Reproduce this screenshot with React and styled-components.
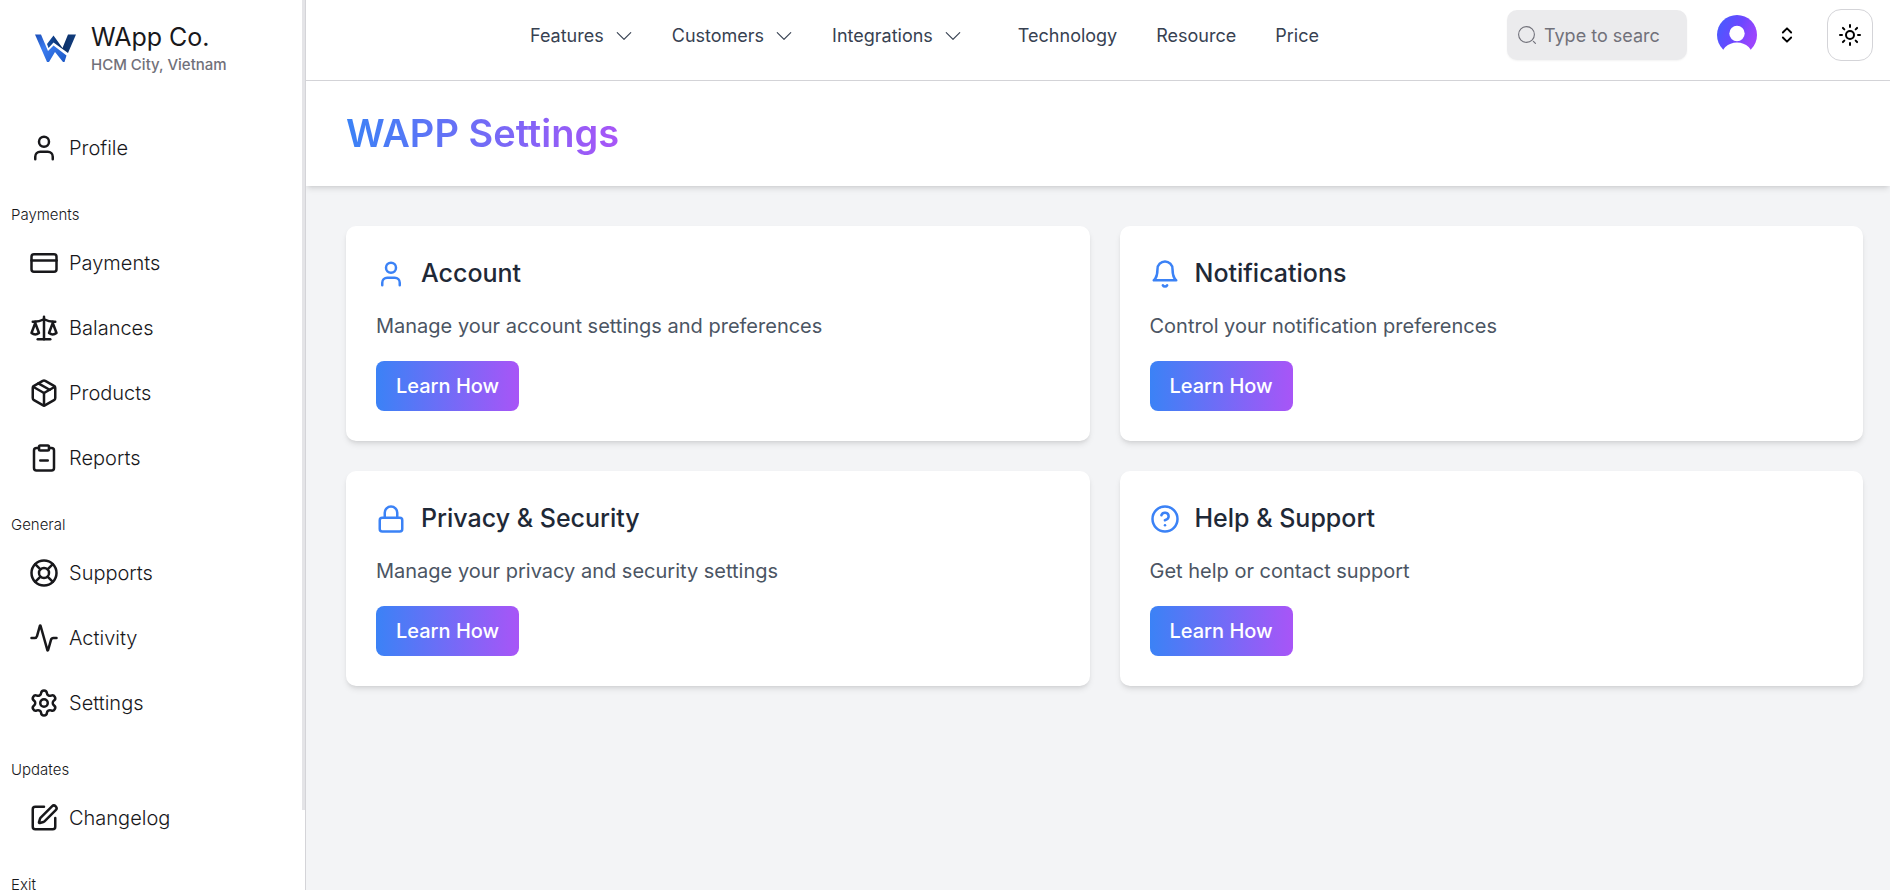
import React from "react";
import styled, { createGlobalStyle } from "styled-components";
import {
  User, CreditCard, Scale, Package, ClipboardMinus, LifeBuoy, Activity,
  Settings, SquarePen, Lock, CircleQuestionMark, ChevronsUpDown, Sun,
} from "lucide-react";
import { FiBell } from "react-icons/fi";
import { BsChevronDown } from "react-icons/bs";

const GlobalStyle = createGlobalStyle`
  *, *::before, *::after { box-sizing: border-box; }
  body { margin: 0; background: #f3f4f6; }
  body, button, input { font-family: Inter, "Liberation Sans", sans-serif; }
  h1, h2, h3, p, ul { margin: 0; padding: 0; font-weight: inherit; }
`;

const Page = styled.div`
  display: flex;
  height: 100vh;
  overflow: hidden;
`;

const Sidebar = styled.aside`
  position: relative;
  flex: 0 0 306px;
  background: #fff;
  border-right: 1px solid #d4d4d8;
`;

const SidebarScroll = styled.div`
  display: flex;
  flex-direction: column;
  height: 100%;
  overflow-y: auto;
  scrollbar-width: none;
  padding-bottom: 78px;
`;

const ScrollThumb = styled.div`
  position: absolute;
  top: 0;
  right: 0;
  width: 3px;
  height: 91%;
  background: #e4e4e7;
`;

const Brand = styled.div`
  display: flex;
  flex: 0 0 115px;
  align-items: flex-start;
  gap: 14px;
  padding: 20px 0 0 34px;
`;

const BrandLogo = styled.svg`
  width: 43px;
  height: 30px;
  margin-top: 13px;
`;

const BrandName = styled.div`
  font-size: 25px;
  line-height: 34px;
  color: #18181b;
`;

const BrandPlace = styled.div`
  font-size: 15px;
  line-height: 22px;
  font-weight: 500;
  color: #71717a;
`;

const GroupLabel = styled.h2`
  font-size: 15px;
  font-weight: 300;
  line-height: 20px;
  padding: 25px 0 5px 11px;
  color: #18181b;
`;

const MenuList = styled.ul`
  list-style: none;
`;

const MenuLink = styled.a`
  display: flex;
  align-items: center;
  gap: 10px;
  height: 65px;
  padding-left: 29px;
  font-size: 20px;
  font-weight: 300;
  color: #18181b;
  text-decoration: none;
`;

const Main = styled.main`
  flex: 1;
  min-width: 0;
  overflow-y: auto;
`;

const TopBar = styled.header`
  display: flex;
  align-items: center;
  height: 81px;
  padding: 0 17px 10px 36px;
  background: #fff;
  border-bottom: 1px solid #d4d4d8;
`;

const Nav = styled.nav`
  flex: 1;
  display: flex;
  justify-content: center;
  align-items: center;
  gap: 39px;
  padding-top: 2px;
`;

const NavMenus = styled.div`
  display: flex;
  gap: 39px;
  padding-right: 17px;
`;

const NavButton = styled.button`
  display: flex;
  align-items: center;
  gap: 11px;
  padding: 0;
  border: 0;
  background: none;
  font-size: 18px;
  line-height: 24px;
  color: #374151;
`;

const NavLink = styled.a`
  font-size: 18px;
  line-height: 24px;
  color: #374151;
  text-decoration: none;
`;

const SearchBox = styled.label`
  display: flex;
  align-items: center;
  gap: 8px;
  width: 180px;
  height: 50px;
  padding: 0 27px 0 11px;
  border-radius: 10px;
  background: #ebebed;
  box-shadow: 0 1px 2px rgba(0, 0, 0, 0.05);
  color: #71717a;
  svg { flex: none; }
`;

const SearchInput = styled.input`
  flex: 1;
  min-width: 0;
  padding: 0;
  border: 0;
  outline: 0;
  background: none;
  font-size: 18px;
  color: #18181b;
  &::placeholder { color: #71717a; opacity: 1; }
`;

const AccountButton = styled.button`
  display: flex;
  align-items: center;
  gap: 20px;
  margin: 0 30px;
  padding: 0;
  border: 0;
  background: none;
  color: #000;
`;

const ThemeButton = styled.button`
  display: grid;
  place-items: center;
  width: 46px;
  height: 52px;
  padding: 0;
  border: 1px solid #d4d4d8;
  border-radius: 14px;
  background: #fff;
  color: #000;
`;

const TitleBand = styled.div`
  display: flex;
  padding: 30px 40px;
  background: #fff;
  box-shadow: 0 4px 6px -1px rgba(0, 0, 0, 0.1), 0 2px 4px -2px rgba(0, 0, 0, 0.1);
`;

const Title = styled.h1`
  font-size: 38px;
  line-height: 45px;
  font-weight: 600;
  color: transparent;
  background: linear-gradient(to right, #3b82f6, #a855f7);
  background-clip: text;
`;

const CardGrid = styled.div`
  display: grid;
  grid-template-columns: 1fr 1fr;
  gap: 30px;
  padding: 40px 27px 40px 40px;
`;

const Card = styled.section`
  display: flex;
  flex-direction: column;
  align-items: flex-start;
  gap: 20px;
  padding: 30px;
  border-radius: 10px;
  background: #fff;
  box-shadow: 0 4px 6px -1px rgba(0, 0, 0, 0.1), 0 2px 4px -2px rgba(0, 0, 0, 0.1);
`;

const CardHead = styled.div`
  display: flex;
  align-items: center;
  gap: 15px;
  color: #3b82f6;
`;

const CardTitle = styled.h3`
  font-size: 25px;
  line-height: 35px;
  font-weight: 500;
  color: #1f2937;
`;

const CardText = styled.p`
  font-size: 20px;
  line-height: 30px;
  color: #4b5563;
`;

const LearnButton = styled.button`
  height: 50px;
  padding: 0 20px;
  border: 0;
  border-radius: 8px;
  background: linear-gradient(to right, #3b82f6, #a855f7);
  font-size: 20px;
  font-weight: 500;
  color: #fff;
`;

const groups = [
  { items: [["Profile", User]] },
  {
    label: "Payments",
    items: [["Payments", CreditCard], ["Balances", Scale], ["Products", Package], ["Reports", ClipboardMinus]],
  },
  { label: "General", items: [["Supports", LifeBuoy], ["Activity", Activity], ["Settings", Settings]] },
  { label: "Updates", items: [["Changelog", SquarePen]] },
  { label: "Exit", items: [] },
];

const cards = [
  { title: "Account", text: "Manage your account settings and preferences", Icon: User },
  { title: "Notifications", text: "Control your notification preferences", Icon: FiBell },
  { title: "Privacy & Security", text: "Manage your privacy and security settings", Icon: Lock },
  { title: "Help & Support", text: "Get help or contact support", Icon: CircleQuestionMark },
];

function Logo() {
  return (
    <BrandLogo viewBox="0 0 43 30" aria-hidden="true">
      <defs>
        <linearGradient id="logoFront" x1="0" y1="0" x2="1" y2="1">
          <stop offset="0" stopColor="#1d4fb8" />
          <stop offset="0.4" stopColor="#3b7cf0" />
          <stop offset="1" stopColor="#1b57c4" />
        </linearGradient>
        <linearGradient id="logoBack" x1="0" y1="0" x2="1" y2="0">
          <stop offset="0" stopColor="#1550a8" />
          <stop offset="0.5" stopColor="#0a2c63" />
          <stop offset="1" stopColor="#123f80" />
        </linearGradient>
      </defs>
      <path fill="url(#logoFront)" d="M1 1.5h6l7 16.5 5.5-5.5 13 10-2 6.5h-1.5L21 19l-6 10h-2z" />
      <path fill="url(#logoBack)" d="M13 11l6.500-8.500 9 12.500 5.500-13.500h8L34 20 19.500 9.500 14.500 15z" />
    </BrandLogo>
  );
}

function Avatar() {
  return (
    <svg width="40" height="40" viewBox="0 0 40 40" aria-hidden="true">
      <defs>
        <linearGradient id="avatarFill" x1="0" y1="0.3" x2="1" y2="0.7">
          <stop offset="0.1" stopColor="#4f57ff" />
          <stop offset="0.5" stopColor="#6c47ff" />
          <stop offset="0.9" stopColor="#9b45fd" />
        </linearGradient>
        <clipPath id="avatarClip"><circle cx="20" cy="20" r="20" /></clipPath>
      </defs>
      <g clipPath="url(#avatarClip)">
        <rect width="40" height="35" fill="url(#avatarFill)" />
        <circle cx="20" cy="18.5" r="7.7" fill="#fff" />
        <ellipse cx="20" cy="43" rx="16.500" ry="15.500" fill="#fff" />
      </g>
    </svg>
  );
}

function SearchIcon() {
  return (
    <svg width="18" height="18" viewBox="0 0 18 18" fill="none" stroke="currentColor" strokeWidth="1.1" strokeLinecap="round" aria-hidden="true">
      <circle cx="8.5" cy="8.5" r="7.9" />
      <path d="M15.4 15.4l2 2" />
    </svg>
  );
}

export default function App() {
  return (
    <>
      <GlobalStyle />
      <Page>
        <Sidebar>
          <SidebarScroll>
            <Brand>
              <Logo />
              <div>
                <BrandName>WApp Co.</BrandName>
                <BrandPlace>HCM City, Vietnam</BrandPlace>
              </div>
            </Brand>
            {groups.map(({ label, items }, i) => (
              <div key={i}>
                {label && <GroupLabel>{label}</GroupLabel>}
                <MenuList>
                  {items.map(([name, Icon]) => (
                    <li key={name}>
                      <MenuLink href="#">
                        <Icon size={30} />
                        {name}
                      </MenuLink>
                    </li>
                  ))}
                </MenuList>
              </div>
            ))}
          </SidebarScroll>
          <ScrollThumb />
        </Sidebar>
        <Main>
          <TopBar>
            <Nav>
              <NavMenus>
                {["Features", "Customers", "Integrations"].map((name) => (
                  <NavButton key={name} type="button">
                    {name}
                    <BsChevronDown size={18} />
                  </NavButton>
                ))}
              </NavMenus>
              <NavLink href="#">Technology</NavLink>
              <NavLink href="#">Resource</NavLink>
              <NavLink href="#">Price</NavLink>
            </Nav>
            <SearchBox>
              <SearchIcon />
              <SearchInput type="text" placeholder="Type to search..." aria-label="Search" />
            </SearchBox>
            <AccountButton type="button" aria-label="Account menu">
              <Avatar />
              <ChevronsUpDown size={20} strokeWidth={2.25} />
            </AccountButton>
            <ThemeButton type="button" aria-label="Toggle theme">
              <Sun size={24} />
            </ThemeButton>
          </TopBar>
          <TitleBand>
            <Title>WAPP Settings</Title>
          </TitleBand>
          <CardGrid>
            {cards.map(({ title, text, Icon }) => (
              <Card key={title}>
                <CardHead>
                  <Icon size={30} />
                  <CardTitle>{title}</CardTitle>
                </CardHead>
                <CardText>{text}</CardText>
                <LearnButton type="button">Learn How</LearnButton>
              </Card>
            ))}
          </CardGrid>
        </Main>
      </Page>
    </>
  );
}
